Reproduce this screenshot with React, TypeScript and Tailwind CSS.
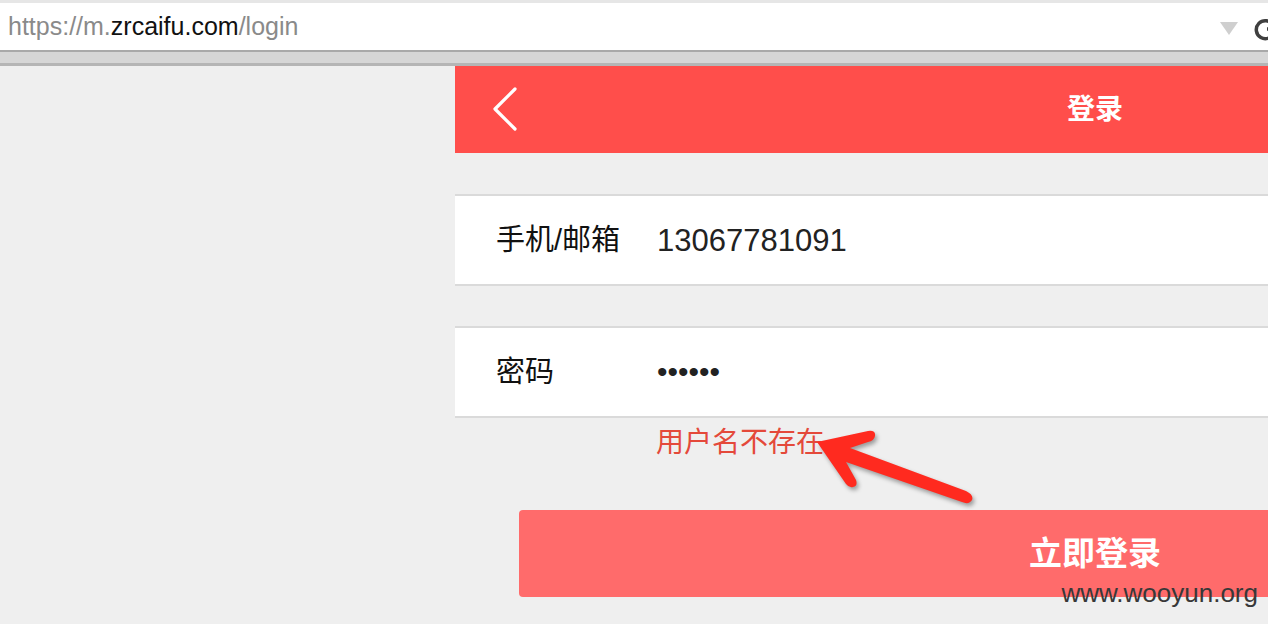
import React from 'react'

const FONT = '"Liberation Sans", "Noto Sans CJK SC", sans-serif'

function UrlBar() {
  return (
    <div className="shrink-0">
      <div className="h-[3px] bg-[#e6e6e6]" />
      <div className="relative flex h-[47px] items-center bg-white pl-[8px]">
        <span className="text-[25px] leading-none text-[#8a8a8a]">
          https://m.<span className="text-[#111]">zrcaifu.com</span>/login
        </span>
        {/* dropdown triangle */}
        <svg className="absolute left-[1219px] top-[17px]" width="20" height="16" viewBox="0 0 20 16">
          <path d="M1 2 L19 2 L10 15 Z" fill="#cfcfcf" />
        </svg>
        {/* reload icon, cut off by the window edge */}
        <svg className="absolute left-[1253px] top-[15px]" width="24" height="24" viewBox="0 0 24 24">
          <path d="M20 7 A 9 9 0 1 0 21 14" fill="none" stroke="#3f3f3f" strokeWidth="3.5" />
          <path d="M14 11 L22 11" stroke="#3f3f3f" strokeWidth="3.5" />
        </svg>
      </div>
      <div className="h-[2px] bg-[#a9a9a9]" />
      <div className="h-[11px] bg-[#d6d6d6]" />
      <div className="h-[3px] bg-[#b5b5b5]" />
    </div>
  )
}

function Field({ label, children }: { label: string; children: React.ReactNode }) {
  return (
    <div className="flex h-[92px] items-center border-y-2 border-[#dadada] bg-white pl-[41px]">
      <span className="w-[161px] shrink-0 text-[29px] leading-none text-[#111]">{label}</span>
      {children}
    </div>
  )
}

function Arrow() {
  return (
    <svg
      className="absolute left-[800px] top-[420px] drop-shadow-[2px_3px_2px_rgba(0,0,0,0.35)]"
      width="190"
      height="90"
      viewBox="0 0 190 90"
    >
      <path
        d="M17 22 L68 11 Q76 10 75 16 Q74 21 68 22 L50 28 L166 71 Q174 75 172 80 Q169 85 162 82 L46 42 L56 60 Q58 66 53 67 Q49 68 46 64 Z"
        fill="#ff2a1f"
      />
    </svg>
  )
}

export default function App() {
  return (
    <div
      className="relative flex h-[624px] w-[1268px] flex-col overflow-hidden bg-[#efefef]"
      style={{ fontFamily: FONT }}
    >
      <UrlBar />
      <div className="flex">
        <div className="w-[455px] shrink-0" />
        <div className="w-[1280px] shrink-0">
          <div className="relative flex h-[87px] items-center justify-center bg-[#ff4e4b]">
            <svg className="absolute left-[36px] top-[20px]" width="28" height="46" viewBox="0 0 28 46">
              <path
                d="M24 3 L4 23 L24 43"
                fill="none"
                stroke="#fff"
                strokeWidth="3.2"
                strokeLinecap="round"
                strokeLinejoin="round"
              />
            </svg>
            <span className="text-[28px] font-bold leading-none text-white">登录</span>
          </div>

          <div className="mt-[41px]">
            <Field label="手机/邮箱">
              <span className="text-[31px] leading-none text-[#222]">13067781091</span>
            </Field>
          </div>
          <div className="mt-[40px]">
            <Field label="密码">
              <span className="text-[30px] leading-none text-[#222]">••••••</span>
            </Field>
          </div>

          <div className="mt-[9px] pl-[201px] text-[28px] leading-[32px] text-[#e4493a]">用户名不存在</div>

          <div className="mx-[64px] mt-[51px] flex h-[87px] items-center justify-center rounded-[4px] bg-[#ff6b6b]">
            <span className="text-[33px] font-bold leading-none text-white">立即登录</span>
          </div>
        </div>
      </div>

      <Arrow />

      <div className="absolute right-[10px] top-[580px] text-[26px] leading-none text-[#383838]">www.wooyun.org</div>
    </div>
  )
}
